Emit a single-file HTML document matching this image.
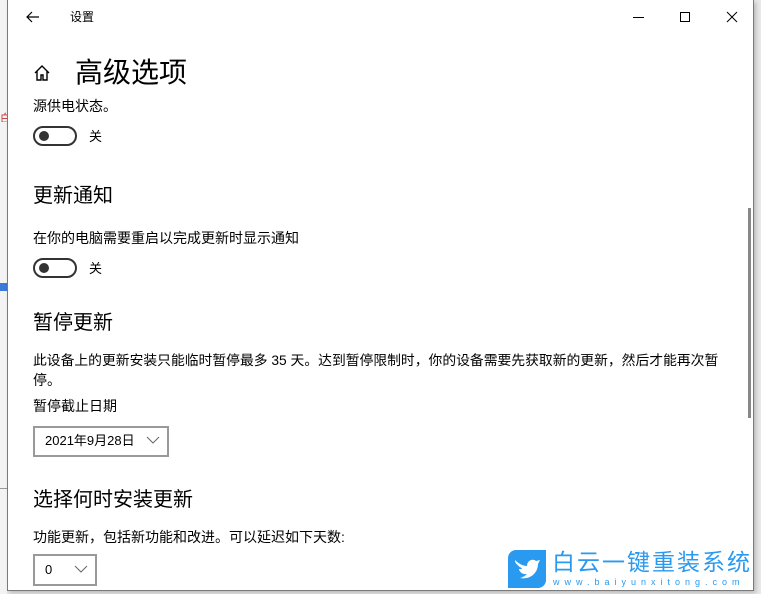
<!DOCTYPE html>
<html><head><meta charset="utf-8"><style>
*{margin:0;padding:0;box-sizing:border-box}
body{width:761px;height:594px;position:relative;overflow:hidden;background:#e8e8e8;font-family:"Liberation Sans","Noto Sans CJK SC",sans-serif;color:#000}
.win{position:absolute;left:7px;top:0;width:747px;height:591px;background:#fff;border:1px solid #7a7a7a;border-top:none;box-shadow:2px 2px 4px rgba(0,0,0,.2)}
.t{position:absolute;white-space:nowrap;line-height:1}
.tog{position:absolute;left:25px;width:44px;height:20px;border:2px solid #333;border-radius:10px}
.tog:after{content:"";position:absolute;left:4px;top:3px;width:10px;height:10px;border-radius:50%;background:#333}
.dd{position:absolute;border:2px solid #999;background:#fff}
.left{position:absolute;left:0;top:0;width:7px;height:594px;background:#f3f3f3}
</style></head><body>
<div class="left"></div>
<div style="position:absolute;left:0;top:110px;width:7px;height:12px;color:#c33;font-size:11px;overflow:hidden">白</div>
<div style="position:absolute;left:0;top:283px;width:7px;height:8px;background:#3a7ad8"></div>
<div style="position:absolute;left:0;top:488px;width:7px;height:1px;background:#999"></div>
<div class="win">
<svg style="position:absolute;left:18px;top:10px" width="14" height="14" viewBox="0 0 14 14"><path d="M13 7H1M6 2L1 7l5 5" fill="none" stroke="#000" stroke-width="1.2"/></svg>
<div class="t" style="left:62px;top:11px;font-size:12px">设置</div>
<div style="position:absolute;left:625px;top:17px;width:11px;height:1px;background:#000"></div>
<div style="position:absolute;left:672px;top:12px;width:10px;height:10px;border:1px solid #000"></div>
<svg style="position:absolute;left:718px;top:11px" width="12" height="12" viewBox="0 0 12 12"><path d="M1 1L11 11M11 1L1 11" stroke="#000" stroke-width="1"/></svg>
<svg style="position:absolute;left:25px;top:64px" width="18" height="18" viewBox="0 0 18 18"><path d="M2 9L9 2l7 7M4 7v9h4v-5h2v5h4V7" fill="none" stroke="#000" stroke-width="1.4"/></svg>
<div class="t" style="left:67px;top:59px;font-size:28px">高级选项</div>
<div class="t" style="left:25px;top:99px;font-size:14px">源供电状态。</div>
<div class="tog" style="top:126px"></div>
<div class="t" style="left:81px;top:130px;font-size:13px">关</div>
<div class="t" style="left:25px;top:186px;font-size:20px">更新通知</div>
<div class="t" style="left:25px;top:231px;font-size:14px">在你的电脑需要重启以完成更新时显示通知</div>
<div class="tog" style="top:258px"></div>
<div class="t" style="left:81px;top:262px;font-size:13px">关</div>
<div class="t" style="left:25px;top:313px;font-size:20px">暂停更新</div>
<div class="t" style="left:25px;top:354px;font-size:13.8px">此设备上的更新安装只能临时暂停最多 35 天。达到暂停限制时，你的设备需要先获取新的更新，然后才能再次暂</div>
<div class="t" style="left:25px;top:373px;font-size:14px">停。</div>
<div class="t" style="left:25px;top:399px;font-size:14px">暂停截止日期</div>
<div class="dd" style="left:25px;top:426px;width:136px;height:31px"></div>
<div class="t" style="left:37px;top:434px;font-size:13px">2021年9月28日</div>
<svg style="position:absolute;left:138px;top:436px" width="14" height="8" viewBox="0 0 14 8"><path d="M1 1l6 6 6-6" fill="none" stroke="#666"/></svg>
<div class="t" style="left:25px;top:490px;font-size:20px">选择何时安装更新</div>
<div class="t" style="left:25px;top:530px;font-size:14px">功能更新，包括新功能和改进。可以延迟如下天数:</div>
<div class="dd" style="left:25px;top:554px;width:64px;height:32px"></div>
<div class="t" style="left:37px;top:563px;font-size:13px">0</div>
<svg style="position:absolute;left:66px;top:565px" width="14" height="8" viewBox="0 0 14 8"><path d="M1 1l6 6 6-6" fill="none" stroke="#666"/></svg>
<div style="position:absolute;left:740px;top:208px;width:3px;height:210px;background:#888"></div>
</div>
<div style="position:absolute;left:508px;top:550px;width:38px;height:38px;background:#2a9af0;border-radius:8px 0 8px 0"></div>
<svg style="position:absolute;left:512px;top:556px" width="30" height="26" viewBox="0 0 30 26"><path d="M3 4c4 4 8 6 12 6 0-5 5-8 9-5l4-1-2 4c0 9-8 16-18 14 4-1 6-3 7-4-5 1-8-3-8-5 2 0 3 0 3-1-3-1-5-3-5-5 1 1 2 1 3 1C5 10 3 7 3 4z" fill="#fff"/></svg>
<div class="t" style="left:552px;top:551px;font-size:23px;color:#2a9af0;letter-spacing:2px">白云一键重装系统</div>
<div class="t" style="left:553px;top:578px;font-size:9px;color:#2a9af0;letter-spacing:5px">www.baiyunxitong.com</div>
</body></html>
